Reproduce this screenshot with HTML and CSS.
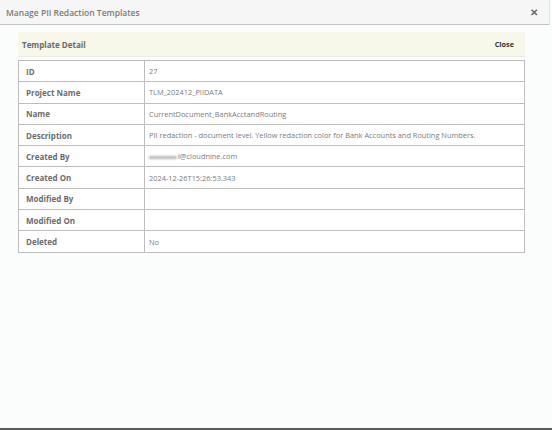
FILE: index.html
```html
<!DOCTYPE html>
<html>
<head>
<meta charset="utf-8">
<link rel="stylesheet" href="styles.css">
</head>
<body>
<div class="page">
  <div class="modal-header">
    <span class="modal-title">Manage PII Redaction Templates</span>
    <span class="modal-close">&#x2715;</span>
  </div>
  <div class="modal-body">
    <div class="panel-head">
      <span class="panel-title">Template Detail</span>
      <span class="panel-close">Close</span>
    </div>
    <table class="detail">
      <tr><th>ID</th><td>27</td></tr>
      <tr><th>Project Name</th><td>TLM_202412_PIIDATA</td></tr>
      <tr><th>Name</th><td>CurrentDocument_BankAcctandRouting</td></tr>
      <tr><th>Description</th><td>PII redaction - document level. Yellow redaction color for Bank Accounts and Routing Numbers.</td></tr>
      <tr><th>Created By</th><td><span class="blur"></span>l@cloudnine.com</td></tr>
      <tr><th>Created On</th><td>2024-12-26T15:26:53.343</td></tr>
      <tr><th>Modified By</th><td></td></tr>
      <tr><th>Modified On</th><td></td></tr>
      <tr><th>Deleted</th><td>No</td></tr>
    </table>
  </div>
  <div class="bottom-bar"></div>
</div>
</body>
</html>
```

FILE: styles.css
```css
html, body {
  margin: 0;
  padding: 0;
  background: #fbfdfc;
}
body {
  font-family: "Open Sans", "Liberation Sans", sans-serif;
  width: 552px;
  height: 430px;
  overflow: hidden;
}
.page {
  display: flex;
  flex-direction: column;
  height: 430px;
}
.modal-header {
  height: 25px;
  box-sizing: border-box;
  margin-right: 2px;
  background: #f6f6f6;
  border-bottom: 1px solid #c4c4c4;
  border-right: 1px solid #e4e4e4;
  display: flex;
  align-items: center;
  justify-content: space-between;
  padding: 0 11px 0 6px;
}
.modal-title {
  font-size: 8.5px;
  font-weight: 600;
  color: #7a7a7a;
}
.modal-close {
  font-size: 10px;
  font-weight: 700;
  color: #666;
}
.modal-body {
  flex: 1;
  padding: 7px 27px 0 18px;
}
.panel-head {
  height: 24px;
  background: #f7f7ea;
  display: flex;
  align-items: center;
  justify-content: space-between;
  padding: 0 11px 0 4px;
  margin-bottom: 3px;
  border-bottom: 1px solid #ecece4;
}
.panel-title {
  font-size: 8px;
  font-weight: 700;
  color: #6a6a6a;
}
.panel-close {
  font-size: 7.3px;
  font-weight: 700;
  color: #333;
}
.detail {
  width: 100%;
  border-collapse: collapse;
  background: #fff;
  border: 1px solid #bdbdbd;
}
.detail th, .detail td {
  border: 1px solid #bdbdbd;
  height: 20.3px;
  padding: 0 0 0 7px;
  text-align: left;
  font-size: 8px;
  vertical-align: middle;
}
.detail th {
  width: 118px;
  font-weight: 700;
  color: #6c6c6c;
}
.detail td {
  padding-left: 4px;
  font-size: 7.4px;
  color: #7c7c7c;
  font-weight: 400;
}
.blur {
  display: inline-block;
  width: 28px;
  height: 3px;
  background: #b8b8b8;
  filter: blur(0.8px);
  vertical-align: middle;
  margin-right: 1px;
}
.bottom-bar {
  height: 2px;
  background: #5a5a5a;
}
```
